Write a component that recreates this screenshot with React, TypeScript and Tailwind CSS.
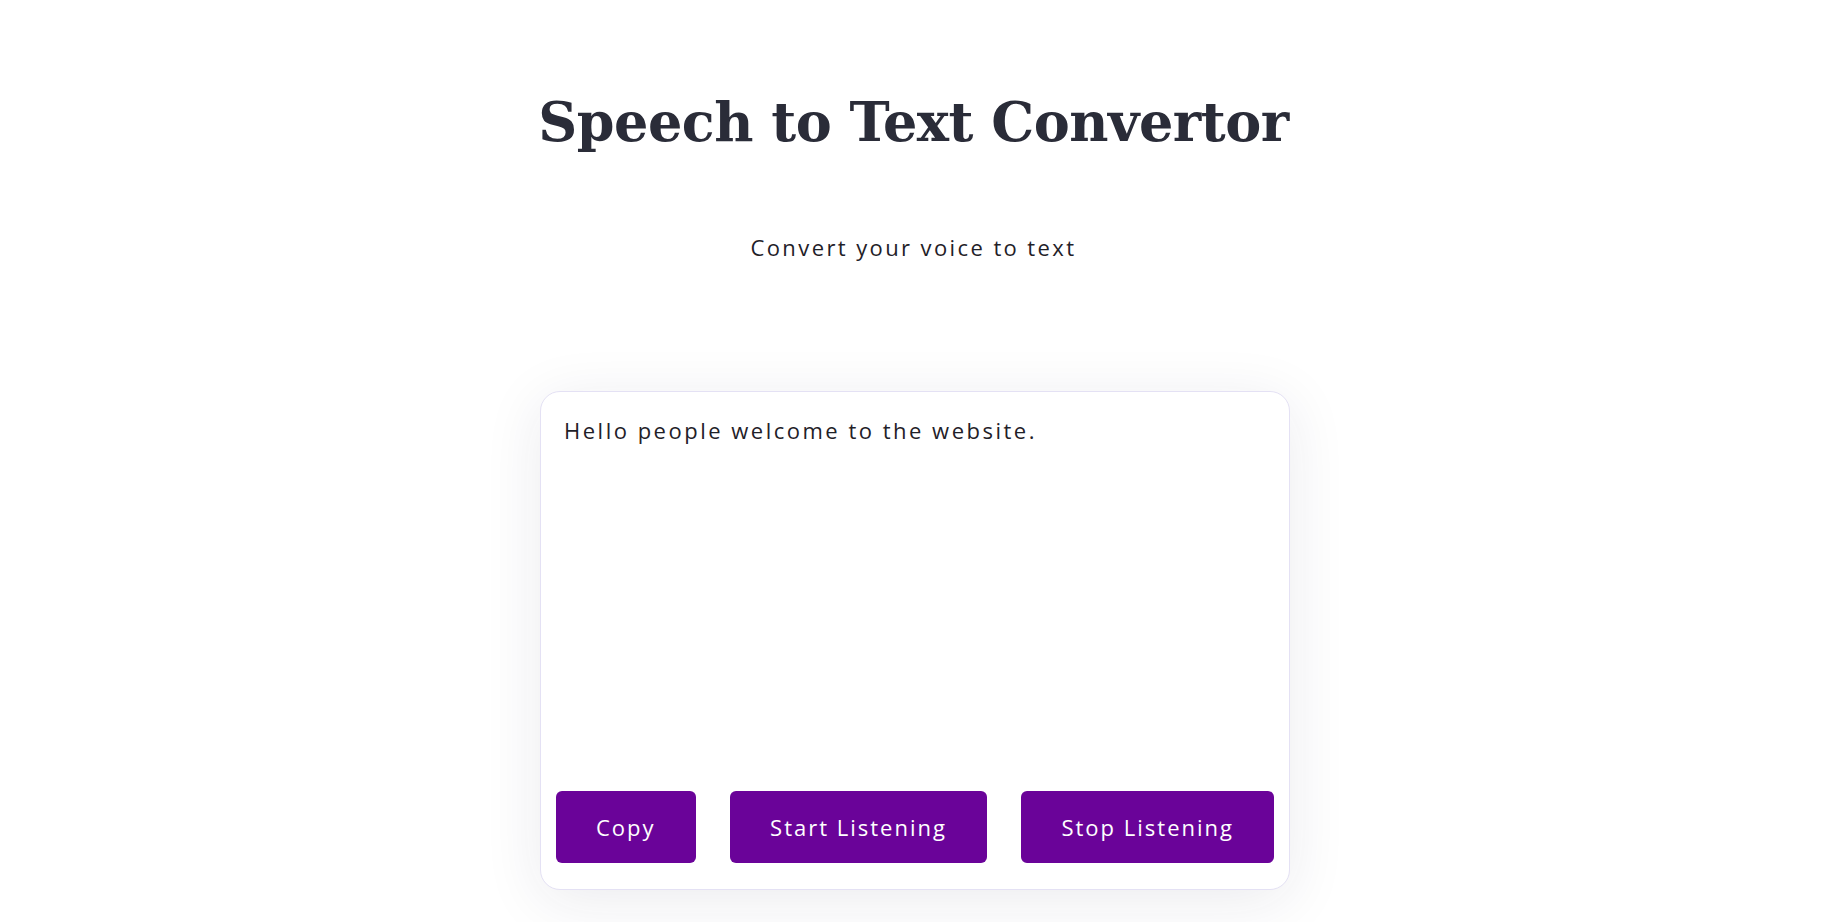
export default function App() {
  const buttons = ['Copy', 'Start Listening', 'Stop Listening'];

  return (
    <div className="min-h-screen w-full bg-white flex flex-col items-center font-['Open_Sans',sans-serif]">
      <h1 className="mt-[86px] text-[54px] leading-[72px] font-bold text-[#2a2c38] font-['DejaVu_Serif',serif] tracking-[-0.5px]">
        Speech to Text Convertor
      </h1>
      <p className="mt-[74px] text-[22px] leading-[30px] tracking-[2.4px] text-[#1f2128]">
        Convert your voice to text
      </p>

      <div className="mt-[129px] ml-[3px] w-[750px] rounded-[20px] border border-[#e4e1f4] bg-white shadow-[0_10px_60px_rgba(30,30,70,0.09)] px-[15px] pt-[15px] pb-[26px]">
        <div className="h-[384px] px-[8px] pt-[8px] text-[22px] leading-[30px] tracking-[2.5px] text-[#1f2128]">
          Hello people welcome to the website.
        </div>
        <div className="flex justify-between">
          {buttons.map((label) => (
            <button
              key={label}
              className="h-[72px] px-[40px] rounded-[6px] bg-[#6a0399] text-white text-[22px] tracking-[2px]"
            >
              {label}
            </button>
          ))}
        </div>
      </div>
    </div>
  );
}
